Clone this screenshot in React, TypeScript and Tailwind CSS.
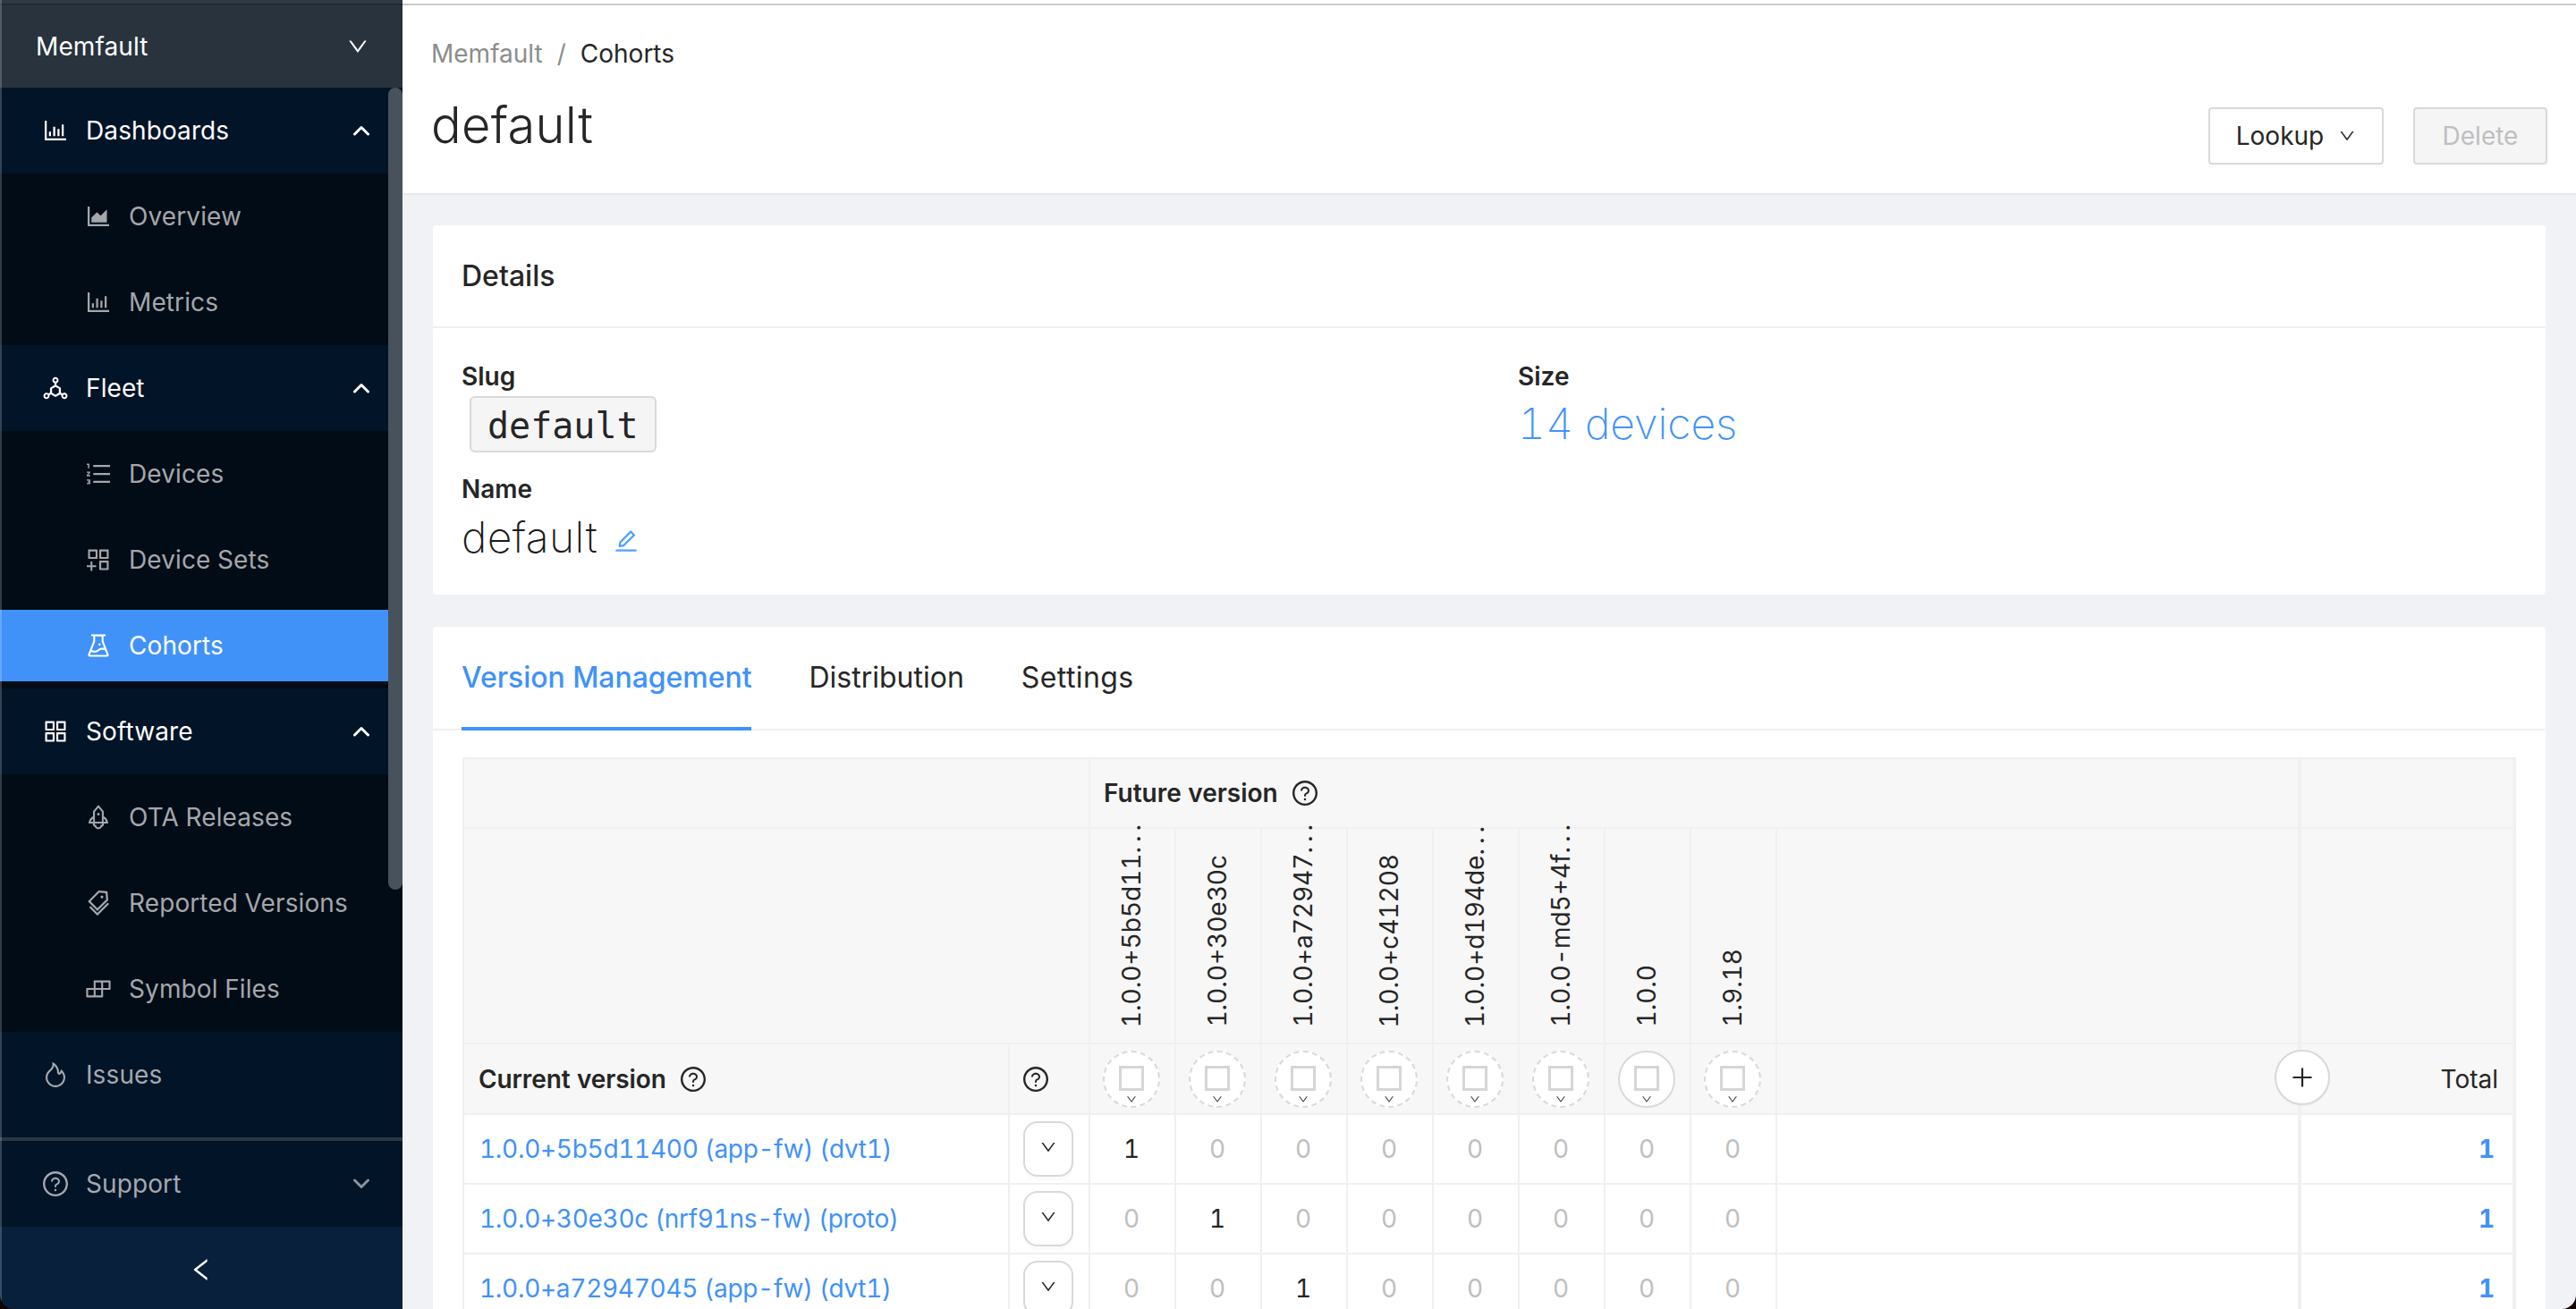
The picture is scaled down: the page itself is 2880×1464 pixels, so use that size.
import React from "react";
import {
  AiOutlineBarChart, AiOutlineAreaChart, AiOutlineDeploymentUnit, AiOutlineOrderedList, AiOutlineAppstoreAdd,
  AiOutlineExperiment, AiOutlineAppstore, AiOutlineRocket, AiOutlineTags, AiOutlineBuild, AiOutlineFire,
  AiOutlineQuestionCircle, AiOutlineEdit, AiOutlineDown, AiOutlineLeft, AiOutlinePlus,
} from "react-icons/ai";

type IconT = React.ComponentType<{ className?: string }>;

function Arrow({ up, gray }: { up?: boolean; gray?: boolean }) {
  return (
    <svg width="18" height="12" viewBox="0 0 18 12" fill="none" className={gray ? "text-[#8b939b]" : "text-white"}>
      <path d={up ? "M1.5 10 L9 2.5 L16.5 10" : "M1.5 2 L9 9.5 L16.5 2"} stroke="currentColor" strokeWidth="3" strokeLinecap="round" strokeLinejoin="round" />
    </svg>
  );
}

function TopItem({ icon: Icon, label, open, dim, down }: { icon: IconT; label: string; open?: boolean; dim?: boolean; down?: boolean }) {
  return (
    <div className={`h-[96px] shrink-0 flex items-center pl-[46px] pr-[37px] bg-[#021427] ${dim ? "text-[#a4a9b0]" : "text-white"}`}>
      <Icon className="w-[32px] h-[32px] shrink-0" />
      <span className="ml-[18px] flex-1">{label}</span>
      {open && <Arrow up />}
      {down && <Arrow gray />}
    </div>
  );
}

function SubItem({ icon: Icon, label, active }: { icon: IconT; label: string; active?: boolean }) {
  return (
    <div className={`h-[80px] my-[8px] shrink-0 flex items-center pl-[94px] ${active ? "bg-[#4092f9] text-white" : "text-[#a4a7ab]"}`}>
      <Icon className="w-[32px] h-[32px] shrink-0" />
      <span className="ml-[18px]">{label}</span>
    </div>
  );
}

function SubGroup({ children }: { children: React.ReactNode }) {
  return <div className="bg-[#010c16] shrink-0 flex flex-col">{children}</div>;
}

function Sidebar() {
  return (
    <aside className="relative w-[450px] shrink-0 h-full flex flex-col bg-[#021427] text-[28px] leading-[40px] tracking-[0.1px]">
      <div className="h-[98px] shrink-0 bg-[#28333e] flex flex-col">
        <div className="h-[4px] bg-[#2e3944]" />
        <div className="h-[2px] bg-[#1f2a35]" />
        <div className="flex-1 flex items-center justify-between pl-[40px] pr-[37px] text-white">
          <span>Memfault</span>
          <AiOutlineDown className="w-[26px] h-[26px]" />
        </div>
      </div>
      <TopItem icon={AiOutlineBarChart} label="Dashboards" open />
      <SubGroup>
        <SubItem icon={AiOutlineAreaChart} label="Overview" />
        <SubItem icon={AiOutlineBarChart} label="Metrics" />
      </SubGroup>
      <TopItem icon={AiOutlineDeploymentUnit} label="Fleet" open />
      <SubGroup>
        <SubItem icon={AiOutlineOrderedList} label="Devices" />
        <SubItem icon={AiOutlineAppstoreAdd} label="Device Sets" />
        <SubItem icon={AiOutlineExperiment} label="Cohorts" active />
      </SubGroup>
      <TopItem icon={AiOutlineAppstore} label="Software" open />
      <SubGroup>
        <SubItem icon={AiOutlineRocket} label="OTA Releases" />
        <SubItem icon={AiOutlineTags} label="Reported Versions" />
        <SubItem icon={AiOutlineBuild} label="Symbol Files" />
      </SubGroup>
      <TopItem icon={AiOutlineFire} label="Issues" dim />
      <div className="h-[22px] shrink-0" />
      <div className="h-[4px] shrink-0 bg-[#2a3643]" />
      <TopItem icon={AiOutlineQuestionCircle} label="Support" dim down />
      <div className="flex-1 bg-[#08203c] flex items-center justify-center text-white pr-[1px] pt-[4px]">
        <AiOutlineLeft className="w-[32px] h-[32px]" />
      </div>
      <div className="absolute right-0 top-[98px] w-[16px] h-[897px] rounded-[8px] bg-[#47525d]" />
      <div className="absolute left-0 top-0 w-[2px] h-full bg-white/20" />
    </aside>
  );
}

function Header() {
  return (
    <header className="bg-white shrink-0">
      <div className="h-[4px]" />
      <div className="h-[2px] bg-[#cacaca]" />
      <div className="h-[212px] border-b-2 border-[#e8e8e8] flex justify-between items-end pl-[32px] pr-[32px] pb-[32px]">
        <div className="self-start">
          <div className="flex items-center text-[28px] leading-[40px] mt-[34px]">
            <span className="text-[#8c8c8c]">Memfault</span>
            <span className="text-[#8c8c8c] mx-[16px]">/</span>
            <span className="text-[#262626]">Cohorts</span>
          </div>
          <h1 className="text-[56px] leading-[72px] font-light tracking-[0.3px] text-[#262626] mt-[24px]">default</h1>
        </div>
        <div className="flex gap-[33px]">
          <button className="w-[196px] h-[64px] border-2 border-[#d9d9d9] rounded-[4px] bg-white text-[28px] text-[#262626] flex items-center justify-center gap-[16px] shadow-[0_4px_0_rgba(0,0,0,0.015)]">
            Lookup <AiOutlineDown className="w-[20px] h-[20px]" />
          </button>
          <button className="w-[150px] h-[64px] border-2 border-[#d9d9d9] rounded-[4px] bg-[#f5f5f5] text-[28px] text-[#bfbfbf]">Delete</button>
        </div>
      </div>
    </header>
  );
}

function DetailsCard() {
  return (
    <section className="bg-white rounded-[4px] h-[413px] shrink-0">
      <div className="h-[115px] border-b-2 border-[#f0f0f0] flex items-center px-[32px]">
        <span className="text-[32px] font-medium text-[#262626] leading-[44px]">Details</span>
      </div>
      <div className="flex px-[32px] pt-[34px]">
        <div className="w-[1181px] shrink-0">
          <div className="text-[28px] leading-[40px] font-semibold text-[#262626]">Slug</div>
          <div className="ml-[9px] mt-[2px] inline-block h-[63px] px-[18px] border-2 border-[#d9d9d9] rounded-[6px] bg-[#f5f5f5] font-['DejaVu_Sans_Mono',monospace] text-[40px] leading-[62px] text-[#262626]">default</div>
          <div className="text-[28px] leading-[40px] font-semibold text-[#262626] mt-[21px]">Name</div>
          <div className="flex items-center text-[48px] leading-[60px] font-extralight tracking-[0.4px] text-[#1a1a1a] mt-[4px]">
            default
            <AiOutlineEdit className="w-[30px] h-[30px] text-[#4da0fb] ml-[17px] mt-[8px]" />
          </div>
        </div>
        <div>
          <div className="text-[28px] leading-[40px] font-semibold text-[#262626]">Size</div>
          <div className="text-[48px] leading-[60px] font-extralight text-[#4092f9] mt-[3px]">14 devices</div>
        </div>
      </div>
    </section>
  );
}

function Tabs() {
  return (
    <div className="h-[116px] border-b-2 border-[#f0f0f0] flex items-stretch pl-[32px] gap-[64px] text-[32px] text-[#262626]">
      <div className="text-[#4092f9] font-medium tracking-[-0.05px] border-b-4 border-[#4092f9] flex items-center -mb-[2px] pt-[2px]">Version Management</div>
      <div className="flex items-center">Distribution</div>
      <div className="flex items-center tracking-[0.4px]">Settings</div>
    </div>
  );
}

function Help({ className = "" }: { className?: string }) {
  return <AiOutlineQuestionCircle className={`w-[32px] h-[32px] text-[#262626] shrink-0 ${className}`} />;
}

const cols = [
  { text: "1.0.0+5b5d11", cut: true },
  { text: "1.0.0+30e30c", cut: false },
  { text: "1.0.0+a72947", cut: true },
  { text: "1.0.0+c41208", cut: false },
  { text: "1.0.0+d194de", cut: true },
  { text: "1.0.0-md5+4f", cut: true },
  { text: "1.0.0", cut: false },
  { text: "1.9.18", cut: false },
];
const rows = [
  { name: "1.0.0+5b5d11400 (app-fw) (dvt1)", one: 0 },
  { name: "1.0.0+30e30c (nrf91ns-fw) (proto)", one: 1 },
  { name: "1.0.0+a72947045 (app-fw) (dvt1)", one: 2 },
];

function Selector({ solid }: { solid?: boolean }) {
  return (
    <div className={`relative w-[64px] h-[64px] rounded-full bg-white border-2 flex justify-center pt-[15px] ${solid ? "border-solid border-[#d9d9d9]" : "border-dashed border-[#d9d9d9]"}`}>
      <div className="w-[28px] h-[28px] border-[3px] border-[#d6d6d6]" />
      <AiOutlineDown className="absolute left-1/2 -translate-x-1/2 bottom-[1px] w-[13px] h-[13px] text-[#444]" />
    </div>
  );
}

function VersionTable() {
  return (
    <div className="relative mt-[30px] mx-[33px] bg-[#f0f0f0] border-t-2 border-l-2 border-r-4 border-[#f0f0f0] grid grid-cols-[608px_88px_repeat(8,94px)_1fr_236px] grid-rows-[76px_239px_77px_76px_76px_76px] gap-[2px] text-[28px] text-[#262626]">
      <div className="col-span-2 bg-[#f7f7f7]" />
      <div className="col-span-9 bg-[#f7f7f7] border-r-2 border-[#f0f0f0] flex items-center pl-[15px] gap-[14px]">
        <span className="font-semibold">Future version</span>
        <Help />
      </div>
      <div className="bg-[#f7f7f7]" />

      <div className="col-span-2 bg-[#f7f7f7]" />
      {cols.map((c) => (
        <div key={c.text} className="bg-[#f7f7f7] flex items-end justify-center pb-[17px] pr-[2px]">
          <span className="[writing-mode:vertical-rl] rotate-180 whitespace-nowrap text-[28px] leading-[34px] text-[#262626]">
            {c.text}
            {c.cut && <span className="tracking-[5px]">...</span>}
          </span>
        </div>
      ))}
      <div className="bg-[#f7f7f7] border-r-2 border-[#f0f0f0]" />
      <div className="bg-[#f7f7f7]" />

      <div className="bg-[#f7f7f7] flex items-center pl-[16px] gap-[14px]">
        <span className="font-semibold tracking-[-0.1px]">Current version</span>
        <Help />
      </div>
      <div className="bg-[#f7f7f7] flex items-center pl-[13px]"><Help /></div>
      {cols.map((c, i) => (
        <div key={c.text} className="bg-[#f7f7f7] flex items-center justify-center pr-[2px]"><Selector solid={i === 6} /></div>
      ))}
      <div className="relative bg-[#f7f7f7] border-r-2 border-[#f0f0f0]">
        <div className="absolute right-[-36px] top-[6px] z-10 w-[62px] h-[62px] rounded-full bg-white border-2 border-[#d9d9d9] flex items-center justify-center shadow-[0_2px_0_rgba(0,0,0,0.02)]">
          <AiOutlinePlus className="w-[30px] h-[30px] text-[#262626]" />
        </div>
      </div>
      <div className="bg-[#f7f7f7] flex items-center justify-end pr-[16px]">Total</div>

      {rows.map((r) => (
        <React.Fragment key={r.name}>
          <div className="bg-white flex items-center pl-[17px] text-[#4092f9] whitespace-nowrap tracking-[-0.3px]">{r.name}</div>
          <div className="bg-white flex items-center pl-[15px]">
            <button className="w-[56px] h-[62px] rounded-[16px] border-2 border-[#d9d9d9] bg-white flex items-center justify-center shadow-[0_4px_0_rgba(0,0,0,0.015)]">
              <AiOutlineDown className="w-[20px] h-[20px] text-[#262626] -mt-[4px]" />
            </button>
          </div>
          {cols.map((c, i) => (
            <div key={c.text} className={`bg-white flex items-center justify-center pr-[2px] ${i === r.one ? "text-[#262626]" : "text-[#bfbfbf]"}`}>{i === r.one ? 1 : 0}</div>
          ))}
          <div className="bg-white border-r-2 border-[#f0f0f0]" />
          <div className="bg-white flex items-center justify-end pr-[20px] font-bold text-[#4092f9]">1</div>
        </React.Fragment>
      ))}
    </div>
  );
}

export default function App() {
  return (
    <div className="w-[2880px] h-[1464px] bg-[#150404] overflow-hidden font-[Inter,sans-serif] tabular-nums">
      <div className="w-full h-full flex rounded-b-[16px] overflow-hidden">
        <Sidebar />
        <main className="flex-1 min-w-0 h-full bg-[#f0f2f5] flex flex-col overflow-hidden">
          <Header />
          <div className="pt-[34px] pl-[34px] pr-[34px] flex flex-col gap-[36px]">
            <DetailsCard />
            <section className="bg-white rounded-[4px] shrink-0 pb-[40px]">
              <Tabs />
              <VersionTable />
            </section>
          </div>
        </main>
      </div>
    </div>
  );
}
